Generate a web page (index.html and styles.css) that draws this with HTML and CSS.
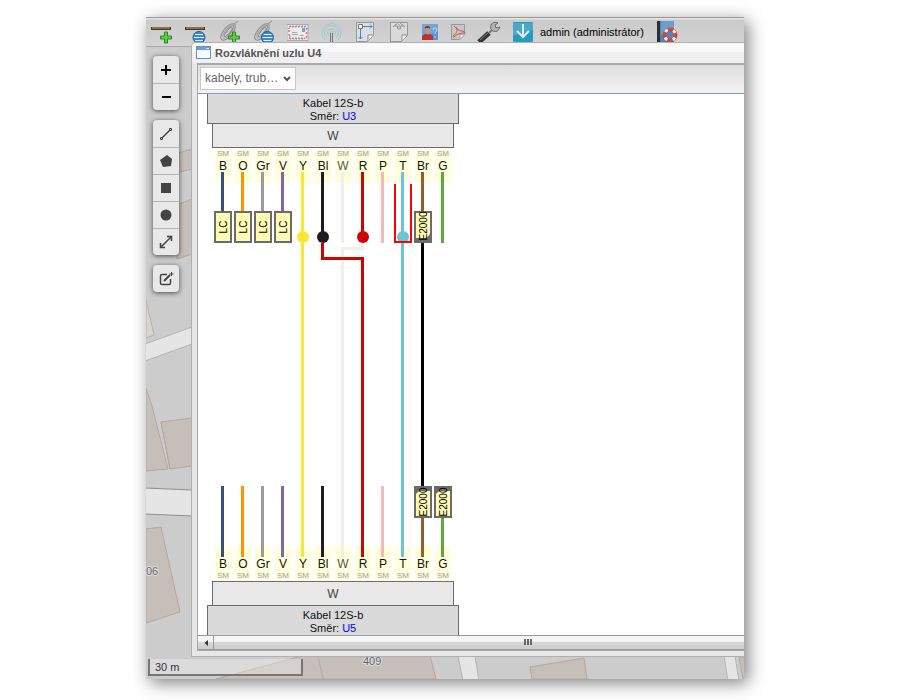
FILE: index.html
```html
<!DOCTYPE html>
<html lang="cs">
<head>
<meta charset="utf-8">
<meta name="viewport" content="width=device-width, initial-scale=1">
<title>Rozvláknění uzlu U4</title>
<link rel="stylesheet" href="styles.css">
</head>
<body>
<div class="app">
  <svg class="map" viewBox="146 17 598 662" preserveAspectRatio="xMinYMax slice" aria-hidden="true">
    <rect width="900" height="700" fill="#ccc"/>
    <g fill="#c5beb9" stroke="#b5a89f">
      <path d="M175 154 192 149V169L172 174ZM174 206 192 199V254L177 259ZM146 388 152 406 168 469 146 471ZM161 422 192 418V466L170 469ZM146 529 161 527 180 612 146 623ZM216 679 302 656H430L436 679ZM530 667 584 658 587 679H532ZM739 657H746V679H743Z"/>
      <path d="M318 656 323 679M161 422 170 469" fill="none"/>
    </g>
    <path d="M146 300 154 335 146 338Z" fill="#d8d5d0" stroke="#b8b2ad"/>
    <path d="M145 344 192 327V344L145 361ZM458 656H475L479 681H463ZM724 656H735L739 681H728Z" fill="#e5e5e5" stroke="#b4b4b4"/>
    <path d="M145 488 192 490V516L145 514Z" fill="#e5e5e5" stroke="#8e8e8e"/>
    <g class="map-label"><text x="146" y="575">06</text><text x="363" y="665">409</text></g>
  </svg>

  <header class="toolbar">
    <button class="tool" aria-label="Přidat trasu"><svg viewBox="0 0 24 24"><path d="M0 7h20v3H0Z" fill="#4a3420"/><path d="M1 8h18" stroke="#d9a765"/><path d="M13.500 12h3v4h4v3h-4v4h-3v-4h-4v-3h4Z" fill="#5fca45" stroke="#2a8a22"/></svg></button>
    <button class="tool" aria-label="Seznam tras"><svg viewBox="0 0 24 24"><path d="M0 7h20v3H0Z" fill="#4a3420"/><path d="M1 8h18" stroke="#d9a765"/><circle cx="14" cy="17.500" r="6" fill="#3f86d0" stroke="#1c5fa6"/><path d="M10 14.500h8M9 17.500h10M10 20.500h8" stroke="#e4f0fc"/></svg></button>
    <button class="tool" aria-label="Přidat kabel"><svg viewBox="0 0 24 24"><g fill="none" stroke="#8b8b8b"><ellipse cx="9" cy="12" rx="4.500" ry="10" transform="rotate(40 9 12)"/><ellipse cx="10" cy="11" rx="3" ry="9" transform="rotate(40 10 11)" stroke="#aaa"/><ellipse cx="10" cy="11" rx="1.500" ry="7" transform="rotate(40 10 11)"/><path d="m6 14 5-7 3 2-5 7M15 4l4-3"/></g><path d="M13.500 12h3v4h4v3h-4v4h-3v-4h-4v-3h4Z" fill="#5fca45" stroke="#2a8a22"/></svg></button>
    <button class="tool" aria-label="Seznam kabelů"><svg viewBox="0 0 24 24"><g fill="none" stroke="#8b8b8b"><ellipse cx="9" cy="12" rx="4.500" ry="10" transform="rotate(40 9 12)"/><ellipse cx="10" cy="11" rx="3" ry="9" transform="rotate(40 10 11)" stroke="#aaa"/><ellipse cx="10" cy="11" rx="1.500" ry="7" transform="rotate(40 10 11)"/><path d="m6 14 5-7 3 2-5 7M15 4l4-3"/></g><circle cx="14.500" cy="17.500" r="6" fill="#3f86d0" stroke="#1c5fa6"/><path d="M10.500 14.500h8M9.500 17.500h10M10.500 20.500h8" stroke="#e4f0fc"/></svg></button>
    <button class="tool" aria-label="Obálka"><svg viewBox="0 0 24 24"><rect x="0" y="4.500" width="21" height="16" fill="#ebebeb" stroke="#aaa"/><g fill="none" stroke-width="1.500"><path d="m2 7 2-1m4 1 2-1m4 1 2-1M2 18l2 1m4-1 2 1m4-1 2 1M2 10v2m0 2v1m17-5 1-2m-1 6 1-2m-1 6 1-2" stroke="#dd7469"/><path d="m5 7 2-1m4 1 2-1m4 1 2-1M5 18l2 1m4-1 2 1m4-1 1 1M2 8v1m0 6 1 2" stroke="#6f9fd4"/></g><path d="M5 12.500h5M5 14.500h6M13 15.500h4" stroke="#aaa"/><path d="M15 8h3v4h-3Z" fill="#7da3ca"/></svg></button>
    <button class="tool" aria-label="Vysílač"><svg viewBox="0 0 24 24"><g fill="none" stroke="#9bcacd"><path d="M4 20a9.500 9.500 0 1 1 13 0"/><path d="M6 18a7 7 0 1 1 9 0"/><path d="M8 16a4 4 0 1 1 5 0"/><circle cx="10.500" cy="13" r="1.500"/></g><path d="M9 13h3v10H9Z" fill="#777"/><path d="M10.500 13v11" stroke="#ccc"/></svg></button>
    <button class="tool" aria-label="Rozměry výkresu"><svg viewBox="0 0 24 24"><path d="M1.500 2.500h17v13l-6 6h-11Z" fill="#dedede" stroke="#999"/><path d="M18 15h-5v6" fill="#f6f6f6" stroke="#888"/><path d="M3.500 4.500h4v4h-4Z" fill="#f5f5f5" stroke="#777"/><path d="M8 6.500h9m-2-2 2 2-2 2M5.500 9v10m-2-2 2 2 2-2" fill="none" stroke="#3c82e0"/></svg></button>
    <button class="tool" aria-label="Export výkresu"><svg viewBox="0 0 24 24"><path d="M1.500 2.500h17v13l-6 6h-11Z" fill="#dadada" stroke="#999"/><path d="M18 15h-5v6" fill="#f6f6f6" stroke="#888"/><path d="M8.500 9v-3h-3l4.500-4 4.500 4h-3v3M4 7l3-3M16 7l-3-3M10 4v6" fill="none" stroke="#999"/></svg></button>
    <button class="tool tool-narrow" aria-label="Uživatelé"><svg viewBox="0 0 24 24"><path d="M2 4h16v16H2Z" fill="#5994d2"/><path d="M2 4h16v7L2 17Z" fill="#70a5da"/><path d="M2 20v-4l3-2h5l3 2v4Z" fill="#b8332b"/><path d="M5 8h5v4l-2 3-3-3Z" fill="#c99273"/><path d="M5 9V7q2-2 5 0v2l-1-1H6Z" fill="#654436"/><path d="M13 10q0-2 2-2t2 2q0 1-2 3v1m0 2v2" fill="none" stroke="#b9d6f2"/></svg></button>
    <button class="tool tool-narrow" aria-label="PDF"><svg viewBox="0 0 24 24"><path d="M4.500 4.500h13v10l-5 5h-8Z" fill="#c6c6c6" stroke="#999"/><path d="M13 19.500v-5h5Z" fill="#eee" stroke="#aaa"/><path d="M7 6c3 3 5 5 10 5.500q2 1.500 0 1.500c-4 0-7 1-10 4q-2 0 0-2c3-2 4-5 2-8" fill="none" stroke="#d5534d"/></svg></button>
    <button class="tool" aria-label="Nastavení"><svg viewBox="0 0 24 24"><path d="m2 22 10-9" stroke="#333" stroke-width="5"/><path d="m3 20 8-7" stroke="#888"/><path d="m12 13 4-4" stroke="#777" stroke-width="2"/><path d="m21 3q-5-2-7 2t2 6q5 2 7-4l-4 1-1-3Z" fill="#b5b5b5" stroke="#666"/></svg></button>
    <button class="tool" aria-label="Stáhnout"><svg viewBox="0 0 24 24"><rect x="2" y="2" width="20" height="20" rx="1" fill="#269bc0"/><path d="M2 3h20v7L2 16Z" fill="#4ba9c5"/><path d="M12 4v13M6 11l6 6 6-6" fill="none" stroke="#e4e9eb" stroke-width="2"/></svg></button>
    <span class="user">admin (administrátor)</span>
    <button class="tool" aria-label="Nápověda"><svg viewBox="0 0 24 24"><path d="M1 1h17v21H1Z" fill="#4b85bb"/><path d="M5 1h13v8L5 15Z" fill="#699fce"/><path d="M1 1h3v21H1Z" fill="#2c3034"/><circle cx="14" cy="15" r="5.500" fill="none" stroke="#c8493e" stroke-width="4"/><circle cx="14" cy="15" r="5.500" fill="none" stroke="#eee" stroke-width="3" stroke-dasharray="3 5.640" stroke-dashoffset="6"/></svg></button>
  </header>

  <div class="workspace">
    <nav class="map-controls" aria-label="Ovládání mapy">
      <div class="group">
        <button aria-label="Přiblížit"><svg viewBox="0 0 16 16"><path d="M3 8h10M8 3v10" stroke="#000" stroke-width="2"/></svg></button>
        <button aria-label="Oddálit"><svg viewBox="0 0 16 16"><path d="M4 8h9" stroke="#000" stroke-width="2"/></svg></button>
      </div>
      <div class="group">
        <button aria-label="Čára"><svg viewBox="0 0 16 16" fill="none" stroke="#444"><path d="m4 12 8-8" stroke-width="1.500"/><path d="M2.500 11.500h2v2h-2ZM11.500 2.500h2v2h-2Z"/></svg></button>
        <button aria-label="Mnohoúhelník"><svg viewBox="0 0 16 16"><path d="m9 2 5 4-1 7-8 1-3-7Z" fill="#444"/></svg></button>
        <button aria-label="Obdélník"><svg viewBox="0 0 16 16"><path d="M3 3h10v10H3Z" fill="#444"/></svg></button>
        <button aria-label="Kruh"><svg viewBox="0 0 16 16"><circle cx="8" cy="8" r="5.500" fill="#444"/></svg></button>
        <button aria-label="Měření"><svg viewBox="0 0 16 16"><path d="m3 13 10-10M9 2.500h4.500V7M2.500 9v4.500H7" fill="none" stroke="#444" stroke-width="1.500"/></svg></button>
      </div>
      <div class="group">
        <button aria-label="Upravit"><svg viewBox="0 0 16 16" fill="none" stroke="#444"><path d="M9 3.500H4Q2.500 3.500 2.500 5v7q0 1.500 1.500 1.500h7q1.500 0 1.500-1.500V8" stroke-width="1.500"/><path d="m6 10 6-6" stroke-width="2"/><path d="M13.500 1v4M11.500 3h4"/></svg></button>
      </div>
    </nav>

    <main class="window">
      <div class="titlebar">
        <svg viewBox="0 0 16 16" aria-hidden="true"><rect x=".5" y="1.500" width="14" height="12" fill="#f7fbff" stroke="#6690c4"/><path d="M1 2h13v3H1Z" fill="#679fe4"/><path d="M10 3.500h3" stroke="#cce3ff"/></svg>
        <h1>Rozvláknění uzlu U4</h1>
      </div>
      <div class="panel">
        <div class="filter">
          <label class="combo"><select aria-label="Zobrazit"><option>kabely, trub…</option></select><svg viewBox="0 0 10 10" aria-hidden="true"><path d="m2 3 3 3 3-3" fill="none" stroke="#555" stroke-width="2"/></svg></label>
        </div>
        <div class="canvas">
          <section class="diagram">
            <div class="cable cable-top">Kabel 12S-b<br>Směr: <a href="#u3">U3</a></div>
            <div class="tube tube-top">W</div>
            <ol class="fibers">
              <li><small>SM</small>B</li><li><small>SM</small>O</li><li><small>SM</small>Gr</li><li><small>SM</small>V</li><li><small>SM</small>Y</li><li><small>SM</small>Bl</li><li><small>SM</small><span class="pale">W</span></li><li><small>SM</small>R</li><li><small>SM</small>P</li><li><small>SM</small>T</li><li><small>SM</small>Br</li><li><small>SM</small>G</li>
            </ol>
            <svg class="wires" viewBox="0 0 242 385" role="img" aria-label="Propojení vláken">
              <g fill="none" stroke-width="3">
                <path d="M10.500 0v40M10.500 314v71" stroke="#334f86"/>
                <path d="M30.500 0v40M30.500 314v71" stroke="#ff9200"/>
                <path d="M50.500 0v40M50.500 314v71" stroke="#9b9b9b"/>
                <path d="M70.500 0v40M70.500 314v71" stroke="#8367a5"/>
                <path d="M90.500 0v385" stroke="#fae830"/>
                <path d="M130.500 0v71M150.500 71v5.500h-20V385" stroke="#efefeb"/>
                <path d="M110.500 0v65M110.500 314v71" stroke="#1d1c22"/>
                <path d="M150.500 0v65M110.500 71v15.500h40V385" stroke="#cf0404"/>
                <path d="M170.500 0v71M170.500 314v71" stroke="#f8b6ba"/>
                <path d="M190.500 0v385" stroke="#6ac4d1"/>
                <path d="M210.500 0v40M210.500 345v40" stroke="#975d2e"/>
                <path d="M210.500 70v245" stroke="#000"/>
                <path d="M230.500 0v71M230.500 345v40" stroke="#5fa83f"/>
              </g>
              <circle cx="91" cy="65" r="6" fill="#fae830"/><circle cx="111" cy="65" r="6" fill="#1d1c22"/><circle cx="151" cy="65" r="6" fill="#cf0404"/><circle cx="191" cy="65" r="6" fill="#6ac4d1"/>
              <path d="M183 12v58h16V12" fill="none" stroke="#f00" stroke-width="2"/>
              <g fill="#fffab4" stroke="#6b6b6b" stroke-width="2">
                <path d="M3 40h16v30H3ZM23 40h16v30H23ZM43 40h16v30H43ZM63 40h16v30H63ZM203 40h16v30H203ZM203 315h16v30H203ZM223 315h16v30H223Z"/>
              </g>
              <path d="M218 61q-1 5-6 5h-8v4h14ZM204 322q2-3 5-3h9v-4h-14ZM224 322q2-3 5-3h9v-4h-14Z" fill="#6b6b6b"/>
              <g class="plug">
                <text transform="translate(15 55) rotate(-90)">LC</text><text transform="translate(35 55) rotate(-90)">LC</text><text transform="translate(55 55) rotate(-90)">LC</text><text transform="translate(75 55) rotate(-90)">LC</text>
                <text transform="translate(215 54) rotate(-90)">E2000</text><text transform="translate(215 330) rotate(-90)">E2000</text><text transform="translate(235 330) rotate(-90)">E2000</text>
              </g>
            </svg>
            <ol class="fibers fibers-bottom">
              <li>B<small>SM</small></li><li>O<small>SM</small></li><li>Gr<small>SM</small></li><li>V<small>SM</small></li><li>Y<small>SM</small></li><li>Bl<small>SM</small></li><li><span class="pale">W</span><small>SM</small></li><li>R<small>SM</small></li><li>P<small>SM</small></li><li>T<small>SM</small></li><li>Br<small>SM</small></li><li>G<small>SM</small></li>
            </ol>
            <div class="tube tube-bottom">W</div>
            <div class="cable cable-bottom">Kabel 12S-b<br>Směr: <a href="#u5">U5</a></div>
          </section>
        </div>
        <div class="scrollbar">
          <button aria-label="Posunout vlevo"><svg viewBox="0 0 14 14"><path d="M9 4v6L5.500 7Z" fill="#333"/></svg></button>
          <div class="thumb"><i></i><i></i><i></i></div>
        </div>
      </div>
    </main>
  </div>
  <footer class="status"><div class="scale">30 m</div></footer>
</div>
</body>
</html>
```
FILE: styles.css
```css
* { box-sizing: border-box; }

body {
  margin: 0;
  min-height: 100vh;
  padding: 17px 156px 21px 146px;
  display: flex;
  background: #fff;
  color: #111;
  font: 11px/13px "Liberation Sans", Arial, sans-serif;
}

button {
  margin: 0;
  padding: 0;
  border: 0;
  background: none;
  display: flex;
  align-items: center;
  justify-content: center;
}

a { color: #00f; text-decoration: none; }

.app {
  flex: 1;
  min-width: 0;
  position: relative;
  display: flex;
  flex-direction: column;
  background: #ccc;
  box-shadow: 4px 4px 16px rgba(0, 0, 0, .5);
}

.map {
  position: absolute;
  inset: 0;
  width: 100%;
  height: 100%;
}

.map-label {
  font-size: 11px;
  fill: #666;
  stroke: #ddd;
  stroke-width: 2px;
  paint-order: stroke;
}

.toolbar {
  position: relative;
  display: flex;
  height: 30px;
  overflow: hidden;
  border-top: 1px solid #999;
  border-bottom: 1px solid #aaa;
  background: linear-gradient(#e4e4e4 1px, #cacaca 2px, #d4d4d4);
}

.tool { flex: none; width: 34px; height: 28px; }
.tool svg { width: 24px; height: 24px; }
.tool-narrow { width: 27px; }

.user {
  flex: none;
  line-height: 28px;
  margin-right: 7px;
  color: #000;
}

.workspace {
  position: relative;
  flex: 1;
  display: flex;
  min-height: 0;
  margin-top: -5px;
}

.map-controls {
  flex: none;
  width: 45px;
  padding: 14px 12px 0 7px;
  display: flex;
  flex-direction: column;
  gap: 10px;
}

.group {
  border-radius: 4px;
  background: #e8e8e8;
  box-shadow: 0 1px 5px rgba(0, 0, 0, .65);
}

.group button { width: 26px; height: 27px; }
.group button + button { border-top: 1px solid #b5b5b5; }
.group svg { width: 16px; height: 16px; }

.window {
  flex: 1;
  min-width: 0;
  display: flex;
  flex-direction: column;
  padding: 0 0 5px 5px;
  border: solid #b0b0b0;
  border-width: 1px 0 1px 1px;
  border-top-left-radius: 5px;
  background: #e7e7e7;
  overflow: hidden;
}

.titlebar {
  display: flex;
  align-items: center;
  gap: 3px;
  height: 20px;
  margin-left: -5px;
  padding-left: 4px;
  background: linear-gradient(#f9f9f9 9px, #f0f0f0 9px);
}

.titlebar svg { width: 16px; height: 16px; }
.titlebar h1 { margin: 0; font-size: 11px; color: #555; }

.panel {
  flex: 1;
  min-height: 0;
  display: flex;
  flex-direction: column;
  border: solid #aaa;
  border-width: 2px 0 1px 1px;
}

.filter {
  height: 29px;
  padding: 2px;
  border-bottom: 1px solid #7c99c9;
  background: linear-gradient(#dedede, #f3f3f3);
}

.combo { position: relative; display: inline-flex; align-items: center; }

.combo select {
  appearance: none;
  width: 96px;
  height: 23px;
  padding: 0 0 0 4px;
  border: 1px solid #c8c8c8;
  border-radius: 0;
  background: #fff;
  color: #666;
  font: 12px/21px "Liberation Sans", Arial, sans-serif;
}

.combo svg { position: absolute; right: 4px; width: 10px; height: 10px; pointer-events: none; }

.canvas { flex: 1; min-height: 0; padding-left: 9px; background: #fff; overflow: hidden; }

.diagram {
  width: 252px;
  display: flex;
  flex-direction: column;
  align-items: center;
  text-align: center;
}

.cable {
  align-self: stretch;
  height: 30px;
  padding-top: 3px;
  border: 1px solid #6b6b6b;
  background: #dadada;
}

.cable-top { border-top: 0; }
.cable-bottom { border-bottom: 0; }

.tube {
  width: 242px;
  height: 24px;
  border: 1px solid #6b6b6b;
  background: #e8e8e8;
  font-size: 12px;
  line-height: 24px;
  color: #444;
}

.tube-top { border-top: 0; }
.tube-bottom { border-bottom: 0; }

.fibers {
  width: 242px;
  margin: 0;
  padding: 1px 3px 0;
  display: flex;
  gap: 4px;
  list-style: none;
  font-size: 12px;
  line-height: 14px;
}

.fibers li {
  width: 16px;
  height: 34px;
  display: flex;
  flex-direction: column;
  align-items: center;
  background: #ffffdc;
}

.fibers small { font-size: 8px; line-height: 10px; color: #999; }
.fibers .pale { color: #555; }
.fibers-bottom { padding: 0 3px 1px; }
.fibers-bottom li { justify-content: flex-end; }
.fibers-bottom small { line-height: 9px; }

.wires {
  position: relative;
  width: 242px;
  height: 385px;
  margin: -11px 0;
}

.plug { font-size: 10px; text-anchor: middle; fill: #000; }

.scrollbar {
  display: flex;
  height: 15px;
  border-top: 1px solid #999;
  border-bottom: 1px solid #999;
  background: linear-gradient(#f6f6f6 40%, #d8d8d8 50%, #ccc);
}

.scrollbar button { width: 16px; border-right: 1px solid #999; }
.scrollbar button svg { width: 14px; height: 14px; }

/* The thumb runs on past the clipped right edge, so its grip sits right of centre. */
.thumb {
  flex: 1;
  display: flex;
  justify-content: center;
  gap: 1px;
  padding: 3px 0 3px 98px;
}

.thumb i { width: 2px; height: 6px; background: #666; }

.status { position: relative; height: 22px; padding: 2px; }

.scale {
  width: 155px;
  height: 17px;
  padding-left: 5px;
  border: solid #777;
  border-width: 0 2px 2px;
  background: rgba(255, 255, 255, .3);
  line-height: 16px;
  color: #333;
}
```
